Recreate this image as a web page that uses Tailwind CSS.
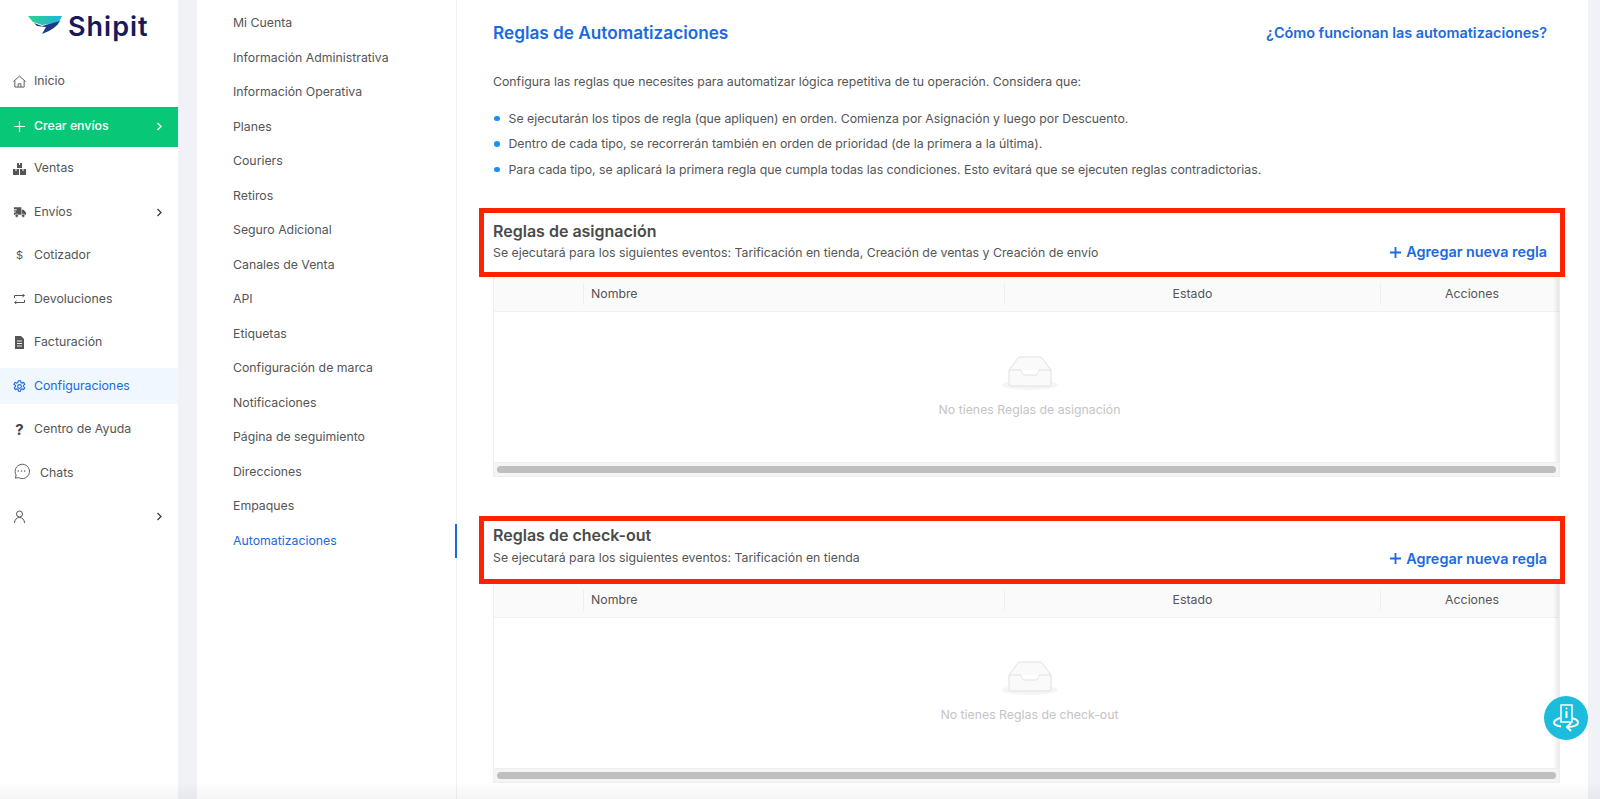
<!DOCTYPE html>
<html lang="es">
<head>
<meta charset="UTF-8">
<title>Reglas de Automatizaciones</title>
<script src="https://cdn.jsdelivr.net/npm/@tailwindcss/browser@4"></script>
</head>
<body class="bg-[#f0f2f7] font-['Inter',sans-serif] text-[12.3px] text-[#555] h-[799px] overflow-hidden relative">
<div class="flex h-[799px]">

  <!-- main sidebar -->
  <aside class="w-[178px] shrink-0 bg-white">
    <div class="h-[60px] flex items-center pl-[28px] gap-[6px]">
      <svg width="34" height="18" viewBox="0 0 34 18" class="mt-[-10px]">
        <defs><linearGradient id="wing" x1="0" x2="1" y1="0" y2="0"><stop offset="0" stop-color="#2fd08a"/><stop offset="1" stop-color="#1cb6e0"/></linearGradient></defs>
        <path d="M0 0H34L31 6Q22 8 14 9L5 6Z" fill="url(#wing)"/>
        <path d="M6 7L14 10 21 8 32 5Q28 13 14 18L18 11 9 10Z" fill="#1c3a8c"/>
      </svg>
      <span class="font-semibold text-[27px] tracking-[1px] leading-none text-[#16195c] mt-[-7px]">Shipit</span>
    </div>
    <nav class="flex flex-col">
      <a class="h-[43px] mb-[4px] flex items-center pl-[13px] gap-[8px]">
        <svg width="13" height="13" viewBox="0 0 14 14" fill="none" stroke="#555" stroke-width="1"><path d="M.5 7L7 1.200 13.500 7M2 6v7h10V6M5.500 13V9.500h3V13"/></svg>Inicio</a>
      <a class="h-[40px] pb-[2px] flex items-center pl-[14px] pr-[15px] gap-[9px] bg-[#08c878] text-white font-medium">
        <svg width="11" height="11" viewBox="0 0 11 11" stroke="#fff" stroke-width="1.200"><path d="M5.500 0v11M0 5.500h11"/></svg>Crear envíos
        <svg class="ml-auto" width="7" height="9" viewBox="0 0 7 9" fill="none" stroke="#fff" stroke-width="1.400"><path d="M1.500 1l3.500 3.500L1.500 8"/></svg></a>
      <a class="h-[43px] flex items-center pl-[13px] gap-[8px]">
        <svg width="13" height="12" viewBox="0 0 13 12" fill="#555"><path d="M4 0h5v5H4zM0 6h6v6H0zM7 6h6v6H7z"/><path d="M6 0h1v2H6zM2.500 6h1v2h-1zM9.500 6h1v2h-1z" fill="#fff"/></svg>Ventas</a>
      <a class="h-[44px] flex items-center pl-[13px] pr-[15px] gap-[8px]">
        <svg width="13" height="12" viewBox="0 0 14 12" fill="#555"><path d="M1 1h8v8H1zM9.500 3.500h2L14 6.500V9H9.500z"/><path d="M0 3h4v1H0zM0 5.500h3v1H0z" fill="#fff"/><circle cx="4" cy="10" r="1.800" stroke="#fff" stroke-width=".6"/><circle cx="11" cy="10" r="1.800" stroke="#fff" stroke-width=".6"/></svg>Envíos
        <svg class="ml-auto" width="7" height="9" viewBox="0 0 7 9" fill="none" stroke="#444" stroke-width="1.400"><path d="M1.500 1l3.500 3.500L1.500 8"/></svg></a>
      <a class="h-[43px] flex items-center pl-[13px] gap-[8px]"><span class="w-[13px] text-center text-[11px]">$</span>Cotizador</a>
      <a class="h-[44px] flex items-center pl-[13px] gap-[8px]">
        <svg width="13" height="10" viewBox="0 0 13 10" fill="none" stroke="#555" stroke-width="1"><path d="M1.500 4V1.500h9.500M9.500 0L11.500 1.500 9.500 3M11.500 6v2.500H2M3.500 7L1.500 8.500 3.500 10"/></svg>Devoluciones</a>
      <a class="h-[43px] flex items-center pl-[13px] gap-[8px]">
        <svg width="13" height="13" viewBox="0 0 13 13"><path d="M2 0h6l3 3v10H2z" fill="#555"/><path d="M4 5h5M4 7.500h5M4 10h5" stroke="#fff" stroke-width=".9"/></svg>Facturación</a>
      <a class="h-[36px] mt-[4px] mb-[4px] flex items-center pl-[13px] gap-[8px] bg-[#f0f7ff] text-[#1a6ae0]">
        <svg width="13" height="13" viewBox="0 0 24 24" fill="none" stroke="#1a6ae0" stroke-width="2"><circle cx="12" cy="12" r="3.500"/><path d="M10 1.500h4l.7 3.200 2 1 3-1.200 2 3.400-2.400 2.200v2l2.400 2.200-2 3.400-3-1.200-2 1-.7 3.200h-4l-.7-3.200-2-1-3 1.200-2-3.400 2.400-2.200v-2L1.700 7.900l2-3.400 3 1.200 2-1z"/></svg>Configuraciones</a>
      <a class="h-[43px] flex items-center pl-[13px] gap-[8px]"><span class="w-[13px] text-center text-[15px] font-bold leading-none text-[#444]">?</span>Centro de Ayuda</a>
      <a class="h-[44px] flex items-center pl-[13px] gap-[10px]">
        <svg class="mt-[-4px]" width="17" height="18" viewBox="0 0 18 18" fill="none" stroke="#555" stroke-width="1"><path d="M2.500 16.500l.8-3.200A7.600 7.600 0 1 1 6 16z"/><circle cx="5.600" cy="9" r=".8" fill="#555" stroke="none"/><circle cx="9" cy="9" r=".8" fill="#555" stroke="none"/><circle cx="12.400" cy="9" r=".8" fill="#555" stroke="none"/></svg>Chats</a>
      <a class="h-[42px] flex items-center pl-[13px] pr-[15px]">
        <svg width="13" height="13" viewBox="0 0 13 13" fill="none" stroke="#555" stroke-width="1"><circle cx="6.500" cy="4" r="3"/><path d="M1.500 13c0-3 2-5.500 5-5.500s5 2.500 5 5.500"/></svg>
        <svg class="ml-auto" width="7" height="9" viewBox="0 0 7 9" fill="none" stroke="#444" stroke-width="1.400"><path d="M1.500 1l3.500 3.500L1.500 8"/></svg></a>
    </nav>
  </aside>

  <!-- settings menu -->
  <div class="ml-[19px] w-[260px] shrink-0 bg-white border-r border-[#f0f0f0] pt-[6px]">
    <a class="h-[34.5px] flex items-center pl-[36px]">Mi Cuenta</a>
    <a class="h-[34.5px] flex items-center pl-[36px]">Información Administrativa</a>
    <a class="h-[34.5px] flex items-center pl-[36px]">Información Operativa</a>
    <a class="h-[34.5px] flex items-center pl-[36px]">Planes</a>
    <a class="h-[34.5px] flex items-center pl-[36px]">Couriers</a>
    <a class="h-[34.5px] flex items-center pl-[36px]">Retiros</a>
    <a class="h-[34.5px] flex items-center pl-[36px]">Seguro Adicional</a>
    <a class="h-[34.5px] flex items-center pl-[36px]">Canales de Venta</a>
    <a class="h-[34.5px] flex items-center pl-[36px]">API</a>
    <a class="h-[34.5px] flex items-center pl-[36px]">Etiquetas</a>
    <a class="h-[34.5px] flex items-center pl-[36px]">Configuración de marca</a>
    <a class="h-[34.5px] flex items-center pl-[36px]">Notificaciones</a>
    <a class="h-[34.5px] flex items-center pl-[36px]">Página de seguimiento</a>
    <a class="h-[34.5px] flex items-center pl-[36px]">Direcciones</a>
    <a class="h-[34.5px] flex items-center pl-[36px]">Empaques</a>
    <a class="h-[34.5px] flex items-center pl-[36px] text-[#1a6ae0] border-r-2 border-[#1a6ae0] mr-[-1px]">Automatizaciones</a>
  </div>

  <!-- content -->
  <main class="w-[1131px] shrink-0 bg-white pl-[36px] pr-[28px]">
    <div class="flex justify-between items-center pt-[21px] h-[44px]">
      <h1 class="text-[#1a6ae0] text-[17.2px] font-semibold">Reglas de Automatizaciones</h1>
      <a class="text-[#1a6ae0] text-[14.4px] font-semibold mr-[13px]">¿Cómo funcionan las automatizaciones?</a>
    </div>
    <p class="mt-[28px] leading-[19.5px]">Configura las reglas que necesites para automatizar lógica repetitiva de tu operación. Considera que:</p>
    <ul class="mt-[19px] flex flex-col gap-[9.5px]">
      <li class="flex items-center gap-[9px] leading-[16px]"><span class="ml-[1px] w-[5.5px] h-[5.5px] rounded-full bg-[#1890ff]"></span>Se ejecutarán los tipos de regla (que apliquen) en orden. Comienza por Asignación y luego por Descuento.</li>
      <li class="flex items-center gap-[9px] leading-[16px]"><span class="ml-[1px] w-[5.5px] h-[5.5px] rounded-full bg-[#1890ff]"></span>Dentro de cada tipo, se recorrerán también en orden de prioridad (de la primera a la última).</li>
      <li class="flex items-center gap-[9px] leading-[16px]"><span class="ml-[1px] w-[5.5px] h-[5.5px] rounded-full bg-[#1890ff]"></span>Para cada tipo, se aplicará la primera regla que cumpla todas las condiciones. Esto evitará que se ejecuten reglas contradictorias.</li>
    </ul>

    <section class="mt-[30.5px]">
      <div class="ml-[-14px] mr-[-5px] h-[69px] border-[5px] border-[#ff2200] pl-[9px] pr-[13px] flex justify-between">
        <div>
          <h2 class="text-[16px] font-semibold text-[#4a4a4a] leading-[20px] mt-[8px]">Reglas de asignación</h2>
          <p class="leading-[16px] mt-[4px]">Se ejecutará para los siguientes eventos: Tarificación en tienda, Creación de ventas y Creación de envío</p>
        </div>
        <a class="self-end mb-[9px] flex items-center gap-[5px] text-[#1a6ae0] text-[14.4px] font-semibold"><svg width="11" height="11" viewBox="0 0 11 11" stroke="#1a6ae0" stroke-width="1.800"><path d="M5.500 0v11M0 5.500h11"/></svg>Agregar nueva regla</a>
      </div>
      <div class="border border-t-0 border-[#eeeeee] h-[200px] flex flex-col relative">
        <div class="h-[35px] bg-[#fafafa] border-b border-[#f0f0f0] flex items-center">
          <div class="w-[89px]"></div>
          <div class="w-[421px] h-[21px] border-l border-[#eeeeee] pl-[7px] flex items-center">Nombre</div>
          <div class="w-[376px] h-[21px] border-l border-[#eeeeee] flex items-center justify-center">Estado</div>
          <div class="flex-1 h-[21px] border-l border-[#eeeeee] flex items-center justify-center pl-[4px]">Acciones</div>
        </div>
        <div class="flex-1 flex flex-col items-center justify-center text-[#c4c4c4] pl-[6px]">
          <svg width="56" height="36" viewBox="0 0 56 36" fill="none"><ellipse cx="28" cy="30" rx="28" ry="5" fill="#f5f5f5"/><path d="M7 15L16 3a2 2 0 0 1 2-1h20a2 2 0 0 1 2 1l9 12v14a2 2 0 0 1-2 2H9a2 2 0 0 1-2-2z" fill="#fafafa" stroke="#e0e0e0"/><path d="M7 15h11c1 0 1.500.5 1.500 1.500S21 20 22 20h12c1 0 2.500-2.500 2.500-3.500S37 15 38 15h11" fill="#fff" stroke="#e0e0e0"/></svg>
          <span class="mt-[10px]">No tienes Reglas de asignación</span>
        </div>
        <div class="h-[14px] bg-[#f4f4f4] border-t border-[#eeeeee] flex items-center px-[3px]"><div class="h-[7px] w-full rounded-full bg-[#bfbfbf]"></div></div>
        <div class="absolute top-0 right-0 bottom-[14px] w-[6px] bg-gradient-to-l from-black/8 to-transparent"></div>
      </div>
    </section>

    <section class="mt-[38.5px]">
      <div class="ml-[-14px] mr-[-5px] h-[68px] border-[5px] border-[#ff2200] pl-[9px] pr-[13px] flex justify-between">
        <div>
          <h2 class="text-[16px] font-semibold text-[#4a4a4a] leading-[20px] mt-[4px]">Reglas de check-out</h2>
          <p class="leading-[16px] mt-[5px]">Se ejecutará para los siguientes eventos: Tarificación en tienda</p>
        </div>
        <a class="self-end mb-[9px] flex items-center gap-[5px] text-[#1a6ae0] text-[14.4px] font-semibold"><svg width="11" height="11" viewBox="0 0 11 11" stroke="#1a6ae0" stroke-width="1.800"><path d="M5.500 0v11M0 5.500h11"/></svg>Agregar nueva regla</a>
      </div>
      <div class="border border-t-0 border-[#eeeeee] h-[199px] flex flex-col relative">
        <div class="h-[34px] bg-[#fafafa] border-b border-[#f0f0f0] flex items-center">
          <div class="w-[89px]"></div>
          <div class="w-[421px] h-[21px] border-l border-[#eeeeee] pl-[7px] flex items-center">Nombre</div>
          <div class="w-[376px] h-[21px] border-l border-[#eeeeee] flex items-center justify-center">Estado</div>
          <div class="flex-1 h-[21px] border-l border-[#eeeeee] flex items-center justify-center pl-[4px]">Acciones</div>
        </div>
        <div class="flex-1 flex flex-col items-center justify-center text-[#c4c4c4] pl-[6px]">
          <svg width="56" height="36" viewBox="0 0 56 36" fill="none"><ellipse cx="28" cy="30" rx="28" ry="5" fill="#f5f5f5"/><path d="M7 15L16 3a2 2 0 0 1 2-1h20a2 2 0 0 1 2 1l9 12v14a2 2 0 0 1-2 2H9a2 2 0 0 1-2-2z" fill="#fafafa" stroke="#e0e0e0"/><path d="M7 15h11c1 0 1.500.5 1.500 1.500S21 20 22 20h12c1 0 2.500-2.500 2.500-3.500S37 15 38 15h11" fill="#fff" stroke="#e0e0e0"/></svg>
          <span class="mt-[10px]">No tienes Reglas de check-out</span>
        </div>
        <div class="h-[14px] bg-[#f4f4f4] border-t border-[#eeeeee] flex items-center px-[3px]"><div class="h-[7px] w-full rounded-full bg-[#bfbfbf]"></div></div>
        <div class="absolute top-0 right-0 bottom-[14px] w-[6px] bg-gradient-to-l from-black/8 to-transparent"></div>
      </div>
    </section>
  </main>
</div>

<!-- floating help button -->
<button class="absolute left-[1544px] top-[696px] w-[44px] h-[44px] rounded-full bg-[#1cbcdc] flex items-center justify-center">
  <svg width="30" height="30" viewBox="0 0 30 30" fill="none" stroke="#fff"><rect x="10" y="2" width="11" height="17" stroke-width="1.500"/><path d="M15.500 8v7" stroke-width="2"/><circle cx="15.500" cy="5.500" r="1" fill="#fff" stroke="none"/><path d="M9 15c-4 1.500-6 3-6 4.500 0 2 3 3.500 7 4M21 15c4 1 6 2.500 6 4.500 0 2.500-4 4.500-10 4.500" stroke-width="2"/><path d="M20 20l-4 4 4 4" stroke-width="2"/></svg>
</button>
<div class="absolute left-0 right-0 bottom-0 h-[18px] bg-gradient-to-b from-transparent to-black/4 pointer-events-none"></div>
</body>
</html>
